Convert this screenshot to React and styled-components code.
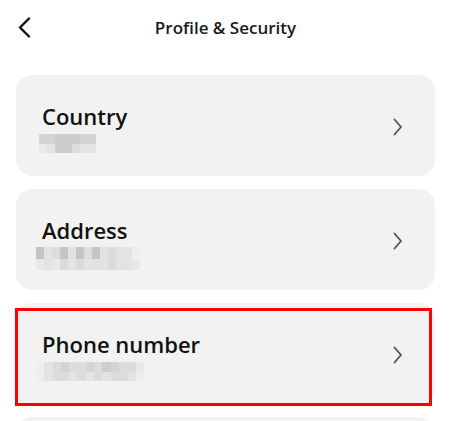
import React from "react";
import styled, { createGlobalStyle } from "styled-components";

const Global = createGlobalStyle`
  html, body { margin: 0; padding: 0; background: #ffffff; }
  body { font-family: "Open Sans", "Noto Sans", "Liberation Sans", sans-serif; color: #111; }
`;

const Page = styled.div`
  width: 451px;
  display: flex;
  flex-direction: column;
`;

const Header = styled.header`
  height: 55px;
  display: grid;
  grid-template-columns: 60px 1fr 60px;
  align-items: center;
  margin-bottom: 20px;
`;

const BackButton = styled.button`
  border: none;
  background: none;
  padding: 0 0 0 18px;
  display: flex;
  align-items: center;
  justify-self: start;
  cursor: pointer;
  margin-top: -1px;
`;

const Title = styled.h1`
  margin: 0;
  text-align: center;
  font-size: 17px;
  font-weight: 600;
  color: #1a1a1a;
  line-height: 24px;
`;

const List = styled.div`
  display: flex;
  flex-direction: column;
  gap: 13px;
  padding: 0 16px;
`;

const Card = styled.div`
  position: relative;
  height: 101px;
  box-sizing: border-box;
  background: #f2f2f2;
  border-radius: 16px;
  padding: 27px 32px 0 26px;
  display: flex;
  align-items: flex-start;
  justify-content: space-between;

  &::before {
    content: "";
    display: ${(p) => (p.$highlighted ? "block" : "none")};
    position: absolute;
    left: -1px;
    top: 5px;
    right: 3px;
    bottom: -2px;
    background: #f2f2f2;
    border: 3px solid #ff0000;
  }
`;

const Texts = styled.div`
  position: relative;
  display: flex;
  flex-direction: column;
  gap: ${(p) => p.$gap}px;
`;

const Label = styled.div`
  font-size: 22px;
  font-weight: 600;
  line-height: 28px;
  color: #111;
`;

const Mosaic = styled.div`
  display: grid;
  grid-template-columns: repeat(${(p) => p.$cols}, ${(p) => p.$cell}px);
  grid-auto-rows: ${(p) => p.$row}px;
  margin-left: ${(p) => p.$shift}px;
`;

const Cell = styled.span`
  display: block;
  background: ${(p) => p.$c};
`;

const Chevron = styled.svg`
  position: relative;
  margin-top: 16px;
  flex: none;
`;

const shades = {
  a: "#cdcdcd",
  b: "#d4d4d4",
  c: "#dcdcdc",
  d: "#e3e3e3",
  e: "#e9e9e9",
  f: "#c4c4c4",
  g: "#eeeeee",
};

const items = [
  {
    id: "country",
    label: "Country",
    gap: 4,
    shift: -3,
    cols: 7,
    cell: 8.2,
    row: 9.5,
    pattern: "bbaaabb" + "edaacdd",
  },
  {
    id: "address",
    label: "Address",
    gap: 3,
    shift: -6,
    cols: 13,
    cell: 8,
    row: 11.5,
    pattern: "fdcfdfcfdcddg" + "edecdcdddcdde",
  },
  {
    id: "phone",
    label: "Phone number",
    gap: 4,
    shift: -6,
    cols: 13,
    cell: 8.3,
    row: 9.5,
    pattern: "gdcbccbcabcce" + "gdccdcdcdccdg",
    highlighted: true,
  },
  {
    id: "more",
    label: "",
    gap: 4,
    shift: -6,
    cols: 10,
    cell: 8,
    row: 9.5,
    pattern: "",
  },
];

function RightChevron() {
  return (
    <Chevron width="10" height="18" viewBox="0 0 10 18" aria-hidden="true">
      <path d="M1.5 1.5 L8 9 L1.5 16.5" fill="none" stroke="#555" strokeWidth="1.9" strokeLinecap="round" strokeLinejoin="round" />
    </Chevron>
  );
}

export default function App() {
  return (
    <>
      <Global />
      <Page>
        <Header>
          <BackButton aria-label="Back">
            <svg width="13" height="21" viewBox="0 0 13 21" aria-hidden="true">
              <path d="M11 1.5 L2 10.5 L11 19.5" fill="none" stroke="#111" strokeWidth="2.4" strokeLinecap="round" strokeLinejoin="round" />
            </svg>
          </BackButton>
          <Title>Profile &amp; Security</Title>
          <span />
        </Header>
        <List>
          {items.map((it) => (
            <Card key={it.id} $highlighted={it.highlighted}>
              {it.label ? (
                <>
                  <Texts $gap={it.gap}>
                    <Label>{it.label}</Label>
                    <Mosaic $cols={it.cols} $cell={it.cell} $row={it.row} $shift={it.shift}>
                      {it.pattern.split("").map((k, i) => (
                        <Cell key={i} $c={shades[k]} />
                      ))}
                    </Mosaic>
                  </Texts>
                  <RightChevron />
                </>
              ) : null}
            </Card>
          ))}
        </List>
      </Page>
    </>
  );
}
